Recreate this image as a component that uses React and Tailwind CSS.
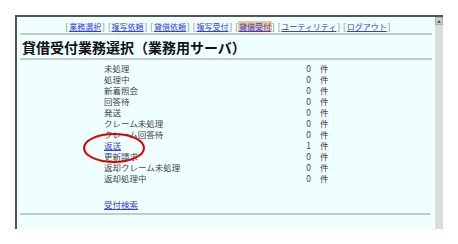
const navItems = ['業務選択', '複写依頼', '貸借依頼', '複写受付', '貸借受付', 'ユーティリティ', 'ログアウト'];

const rows = [
  { label: '未処理', count: 0 },
  { label: '処理中', count: 0 },
  { label: '新着照会', count: 0 },
  { label: '回答待', count: 0 },
  { label: '発送', count: 0 },
  { label: 'クレーム未処理', count: 0 },
  { label: 'クレーム回答待', count: 0 },
  { label: '返送', count: 1, link: true },
  { label: '更新請求', count: 0 },
  { label: '返却クレーム未処理', count: 0 },
  { label: '返却処理中', count: 0 },
];

const font = { fontFamily: '"Noto Sans CJK JP", "Liberation Sans", sans-serif' };

export default function App() {
  return (
    <div className="w-[458px] h-[244px] bg-white pt-[15px] pl-[15px] overflow-hidden" style={font}>
      <div className="relative flex w-[428px] h-[214px] border-t-2 border-l-2 border-[#555]">
        <div className="flex-1 bg-[#efffff] px-[3px]">
          {/* Nav */}
          <div className="flex justify-center gap-[3px] pt-[4px] pl-[4px] text-[8px] leading-[11px] h-[15px]">
            {navItems.map((item) => (
              <span key={item} className="text-[#777]">
                [
                <a
                  className={`underline text-[#3a3adf] px-[1px] ${
                    item === '貸借受付' ? 'bg-[#e8c890]' : ''
                  }`}
                >
                  {item}
                </a>
                ]
              </span>
            ))}
          </div>
          <div className="mt-[1px] h-[2px] bg-[#c4c8c8]" />

          {/* Title */}
          <h1 className="pl-[2px] pt-[4px] h-[23px] text-[14px] leading-[17px] font-bold text-[#111]">
            貸借受付業務選択（業務用サーバ）
          </h1>
          <div className="h-[2px] bg-[#c4c8c8]" />

          {/* Rows */}
          <div className="pt-[3px] text-[8.5px] leading-[11px] text-[#444]">
            {rows.map((r) => (
              <div key={r.label} className="flex h-[11px]">
                <div className="ml-[84px] w-[197px]">
                  {r.link ? <a className="underline text-[#3a3adf]">{r.label}</a> : r.label}
                </div>
                <div className="w-[10px] text-right">{r.count}</div>
                <div className="ml-[9px]">件</div>
              </div>
            ))}
            <div className="h-[15px]" />
            <div className="ml-[84px] h-[12px]">
              <a className="underline text-[#3a3adf]">受付検索</a>
            </div>
          </div>
          <div className="mt-[2px] h-[2px] bg-[#c4c8c8] mr-[2px]" />
        </div>

        {/* Scrollbar */}
        <div className="w-[8px] bg-[#dcdcdc] flex flex-col">
          <div className="h-[8px] bg-[#d0d0d0] border border-[#aaa] flex items-center justify-center">
            <svg width="4" height="3" viewBox="0 0 4 3">
              <path d="M2 0 L4 3 L0 3 Z" fill="#555" />
            </svg>
          </div>
        </div>

        {/* Red annotation ellipse */}
        <svg
          className="absolute left-[65px] top-[115px] pointer-events-none"
          width="64"
          height="32"
          viewBox="0 0 64 32"
        >
          <ellipse cx="32" cy="16" rx="30" ry="14" fill="none" stroke="#e00000" strokeWidth="2" />
        </svg>
      </div>
    </div>
  );
}
